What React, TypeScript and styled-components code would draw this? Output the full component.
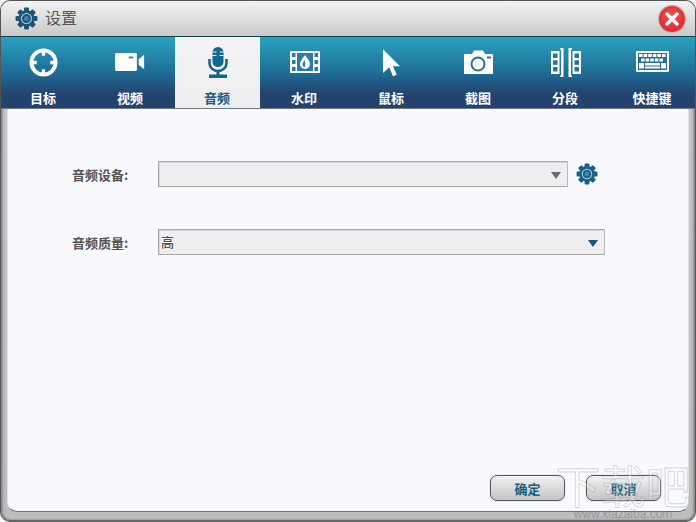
import React from "react";
import styled, { createGlobalStyle } from "styled-components";

const Global = createGlobalStyle`
  html, body { margin: 0; padding: 0; background: #fff; }
  body { width: 696px; height: 522px; overflow: hidden; font-family: "Liberation Sans", "Noto Sans CJK SC", sans-serif; }
`;
const Win = styled.div`
  position: relative; width: 696px; height: 522px; box-sizing: border-box;
  display: flex; flex-direction: column; overflow: hidden;
  border-radius: 10px 10px 10px 10px; border: 1px solid #555; border-bottom: 2px solid #666;
  background: linear-gradient(#c9c9cc, #bdbdc0);
  box-shadow: inset 2px 0 2px #8d8d8d, inset -2px 0 2px #8d8d8d;
`;
const TitleBar = styled.div`
  height: 35px; flex: none; display: flex; align-items: center; padding: 0 10px 0 14px;
  background: linear-gradient(#f3f3f3, #c9c9c9);
  border-bottom: 1px solid #123f4c;
`;
const TitleText = styled.span`
  margin: -3px 0 0 7px; font-size: 16px; color: #555; font-family: "Noto Sans CJK SC", sans-serif; flex: 1;
`;
const Tabs = styled.div`
  height: 71px; flex: none; display: grid; grid-template-columns: repeat(8, 87px); margin: 0 -1px;
  background: linear-gradient(#2aa3bf 0%, #1f6d96 50%, #23446f 80%, #24426e 100%);
  border-bottom: 1px solid #70767c;
`;
const Tab = styled.div<{ $active?: boolean }>`
  display: flex; flex-direction: column; align-items: center;
  margin: 0 ${p => (p.$active ? "1px" : "0")};
  background: ${p => (p.$active ? "linear-gradient(#f3f2f5,#eeedf0)" : "transparent")};
  color: ${p => (p.$active ? "#14607f" : "#fff")};
`;
const IconSlot = styled.div`
  height: 52px; width: 100%; display: flex; align-items: center; justify-content: center;
  padding: 4px 0 6px; box-sizing: border-box;
`;
const TabLabel = styled.span`
  font-size: 13px; font-weight: 700; line-height: 16px; margin: 1px 1px 0 0; font-family: "Noto Sans CJK SC", sans-serif;
`;
const Body = styled.div`
  flex: 1; position: relative; margin: 0 6px 8px 6px; background: #f9faff;
  border-left: 1px solid #e0e0e2; border-right: 1px solid #e0e0e2; border-bottom: 1px solid #6d6d6d;
  border-radius: 0 0 10px 10px;
  display: flex; flex-direction: column; padding: 52px 0 10px 64px;
`;
const Row = styled.div`display: flex; align-items: center; height: 26px; margin-bottom: 42px;`;
const Label = styled.label`
  width: 86px; flex: none; font-size: 13px; font-weight: 700; color: #555; font-family: "Noto Sans CJK SC", sans-serif; white-space: nowrap;
`;
const Select = styled.div<{ $width: number }>`
  width: ${p => p.$width}px; height: 26px; box-sizing: border-box; display: flex; align-items: center; justify-content: space-between;
  padding: 0 6px 2px 2px; background: #efedf0; border: 1px solid #a5a5a8; border-right-color: #b8b8ba; border-radius: 1px;
  box-shadow: inset 1px 1px 0 #d8d8d8; font-size: 13px; color: #333; font-family: "Noto Sans CJK SC", sans-serif;
`;
const Arrow = styled.i<{ $color: string }>`
  width: 0; height: 0; border-left: 5.5px solid transparent; border-right: 5.5px solid transparent;
  border-top: 7px solid ${p => p.$color}; margin-top: 4px;
`;
const SideGear = styled.div`margin-left: 8px; display: flex;`;
const Footer = styled.div`margin-top: auto; margin-right: 27px; display: flex; justify-content: flex-end; gap: 21px;`;
const Btn = styled.button`
  width: 75px; height: 26px; padding: 0; border: 1px solid #56595c; border-radius: 7px;
  background: linear-gradient(#f2f2f4, #c4c4c8); color: #14607f; font-size: 13px; font-weight: 700;
  font-family: "Noto Sans CJK SC", sans-serif; box-shadow: 0 0 0 1px #e8e8e8;
`;
const Close = styled.div`
  width: 26px; height: 26px; border-radius: 50%; background: radial-gradient(circle at 50% 40%, #f2504f, #d81d20);
  box-shadow: 0 0 0 1px #b5b5b5; display: flex; align-items: center; justify-content: center;
`;
const Watermark = styled.div`
  position: absolute; right: 4px; bottom: 0; width: 136px; display: flex; flex-direction: column; align-items: center;
  pointer-events: none; font-family: "Noto Sans CJK SC", sans-serif;
`;
const WmBig = styled.span`
  font-size: 45px; line-height: 46px; font-weight: 400; white-space: nowrap;
  color: rgba(255,255,255,.25); -webkit-text-stroke: 1px rgba(120,120,120,.28);
`;
const WmSmall = styled.span`
  font-size: 12px; line-height: 12px; color: rgba(110,110,110,.5); font-family: "Liberation Sans", sans-serif; white-space: nowrap;
`;

const Gear = ({ size, color, hole = "#9fd0e6" }: { size: number; color: string; hole?: string }) => {
  const teeth = Array.from({ length: 8 }, (_, i) => i * 45);
  return (
    <svg width={size} height={size} viewBox="0 0 24 24">
      {teeth.map(a => (
        <rect key={a} x="9.4" y="0.6" width="5.2" height="5" rx="1.1" fill={color} transform={`rotate(${a} 12 12)`} />
      ))}
      <circle cx="12" cy="12" r="8.6" fill={color} />
      <circle cx="12" cy="12" r="5.2" fill="none" stroke={hole} strokeWidth="1.1" />
      <circle cx="12" cy="12" r="2.6" fill={hole} opacity="0.35" />
    </svg>
  );
};

const Target = () => (
  <svg width="29" height="29" viewBox="0 0 30 30" fill="none" stroke="#fff">
    <circle cx="15" cy="15" r="12.500" strokeWidth="4" />
    <path d="M15 1v7M15 22v7M1 15h7M22 15h7" strokeWidth="3.400" />
  </svg>
);
const Video = () => (
  <svg width="33" height="20" viewBox="0 0 34 22" fill="#fff">
    <path d="M1.5 1h21a1.500 1.500 0 0 1 1.500 1.500v17a1.500 1.500 0 0 1-1.500 1.500h-21A1.500 1.500 0 0 1 0 19.500v-17A1.500 1.500 0 0 1 1.500 1z" />
    <path d="M26 8l6-5v16l-6-5z" />
    <rect x="15" y="5" width="5" height="2" fill="#2c7aa0" />
  </svg>
);
const Mic = () => (
  <svg width="20" height="31" viewBox="0 0 20 31">
    <rect x="4.500" y="0" width="11" height="20" rx="5.500" fill="#14668c" />
    <path d="M4.500 5h4M4.500 8.500h4M11.500 5h4M11.500 8.500h4" stroke="#eef" strokeWidth="1" />
    <path d="M1.500 12v4a8.500 8 0 0 0 17 0v-4" fill="none" stroke="#14668c" strokeWidth="2.600" />
    <rect x="8.500" y="23" width="3" height="5" fill="#14668c" />
    <rect x="1" y="27.500" width="18" height="3.500" fill="#14668c" />
  </svg>
);
const Film = () => (
  <svg width="30" height="22" viewBox="0 0 30 22">
    <rect width="30" height="22" rx="1" fill="#fff" />
    <g fill="#2a7ba1">
      <rect x="2" y="2" width="3.500" height="4" /><rect x="2" y="9" width="3.500" height="4" /><rect x="2" y="16" width="3.500" height="4" />
      <rect x="24.500" y="2" width="3.500" height="4" /><rect x="24.500" y="9" width="3.500" height="4" /><rect x="24.500" y="16" width="3.500" height="4" />
      <rect x="7" y="2" width="16" height="18" />
    </g>
    <path d="M15 4c3 4 5 6 5 9a5 5 0 0 1-10 0c0-3 2-5 5-9z" fill="#fff" />
    <path d="M15 9c-1.500 2-2.500 3-2.500 4.500a2.500 2.500 0 0 0 2.500 2.500z" fill="#2a7ba1" />
  </svg>
);
const Cursor = () => (
  <svg width="19" height="29" viewBox="0 0 20 30" fill="#fff">
    <path d="M1 1l18 18h-7.500l4 9-4 1.500-3.800-9.500-6.700 6z" />
  </svg>
);
const Camera = () => (
  <svg width="29" height="24" viewBox="0 0 29 24">
    <path d="M1 4h7l2-3.500h9L21 4h7a1 1 0 0 1 1 1v18a1 1 0 0 1-1 1H1a1 1 0 0 1-1-1V5a1 1 0 0 1 1-1z" fill="#fff" />
    <circle cx="14" cy="14" r="6.500" fill="none" stroke="#2a6f95" strokeWidth="2" />
    <rect x="23" y="6.500" width="4" height="2" fill="#2a6f95" />
  </svg>
);
const Split = () => (
  <svg width="30" height="29" viewBox="0 0 30 29" fill="#fff">
    <path d="M0 3h8.500v23H0z" /><path d="M21.500 3H30v23h-8.500z" />
    <g fill="#2a729a">
      <rect x="2" y="5.500" width="4.500" height="4.500" /><rect x="2" y="12.300" width="4.500" height="4.500" /><rect x="2" y="19" width="4.500" height="4.500" />
      <rect x="23.500" y="5.500" width="4.500" height="4.500" /><rect x="23.500" y="12.300" width="4.500" height="4.500" /><rect x="23.500" y="19" width="4.500" height="4.500" />
    </g>
    <path d="M9 0h3.500v29H9v-1.500h1V1.500H9z" />
    <path d="M21 0h-3.500v29H21v-1.500h-1V1.500h1z" />
  </svg>
);
const Keyboard = () => (
  <svg width="33" height="22" viewBox="0 0 33 22">
    <rect width="33" height="21" rx="1" fill="#fff" />
    <rect x="2" y="2" width="29" height="17" fill="#256f96" />
    <g fill="#fff">
      {[3, 7.6, 12.200, 16.800, 21.400, 26].map(x => <rect key={x} x={x} y="3" width="3.600" height="3" />)}
      {[5, 9.600, 14.200, 18.800, 23.400].map(x => <rect key={x} x={x} y="7.500" width="3.600" height="3" />)}
      <rect x="3" y="12" width="5" height="5.500" />
      <rect x="9" y="12" width="15" height="2.500" />
      <rect x="9" y="15.500" width="15" height="2" />
      <rect x="25" y="12" width="5" height="5.500" />
    </g>
  </svg>
);

const tabs: { label: string; icon: React.ReactNode; active?: boolean }[] = [
  { label: "目标", icon: <Target /> },
  { label: "视频", icon: <Video /> },
  { label: "音频", icon: <Mic />, active: true },
  { label: "水印", icon: <Film /> },
  { label: "鼠标", icon: <Cursor /> },
  { label: "截图", icon: <Camera /> },
  { label: "分段", icon: <Split /> },
  { label: "快捷键", icon: <Keyboard /> },
];

export default function App() {
  return (
    <>
      <Global />
      <Win>
        <TitleBar>
          <Gear size={23} color="#1c5475" />
          <TitleText>设置</TitleText>
          <Close>
            <svg width="14" height="14" viewBox="0 0 14 14"><path d="M2 2l10 10M12 2L2 12" stroke="#fff" strokeWidth="3.400" strokeLinecap="round" /></svg>
          </Close>
        </TitleBar>
        <Tabs>
          {tabs.map(t => (
            <Tab key={t.label} $active={t.active}>
              <IconSlot>{t.icon}</IconSlot>
              <TabLabel>{t.label}</TabLabel>
            </Tab>
          ))}
        </Tabs>
        <Body>
          <Row>
            <Label>音频设备:</Label>
            <Select $width={410}><span /><Arrow $color="#6a6a6e" /></Select>
            <SideGear><Gear size={22} color="#1a5f86" /></SideGear>
          </Row>
          <Row>
            <Label>音频质量:</Label>
            <Select $width={447}><span>高</span><Arrow $color="#15587e" /></Select>
          </Row>
          <Footer>
            <Btn>确定</Btn>
            <Btn>取消</Btn>
          </Footer>
        </Body>
        <Watermark>
          <WmBig>下载吧</WmBig>
          <WmSmall>www.xiazaiba.com</WmSmall>
        </Watermark>
      </Win>
    </>
  );
}
